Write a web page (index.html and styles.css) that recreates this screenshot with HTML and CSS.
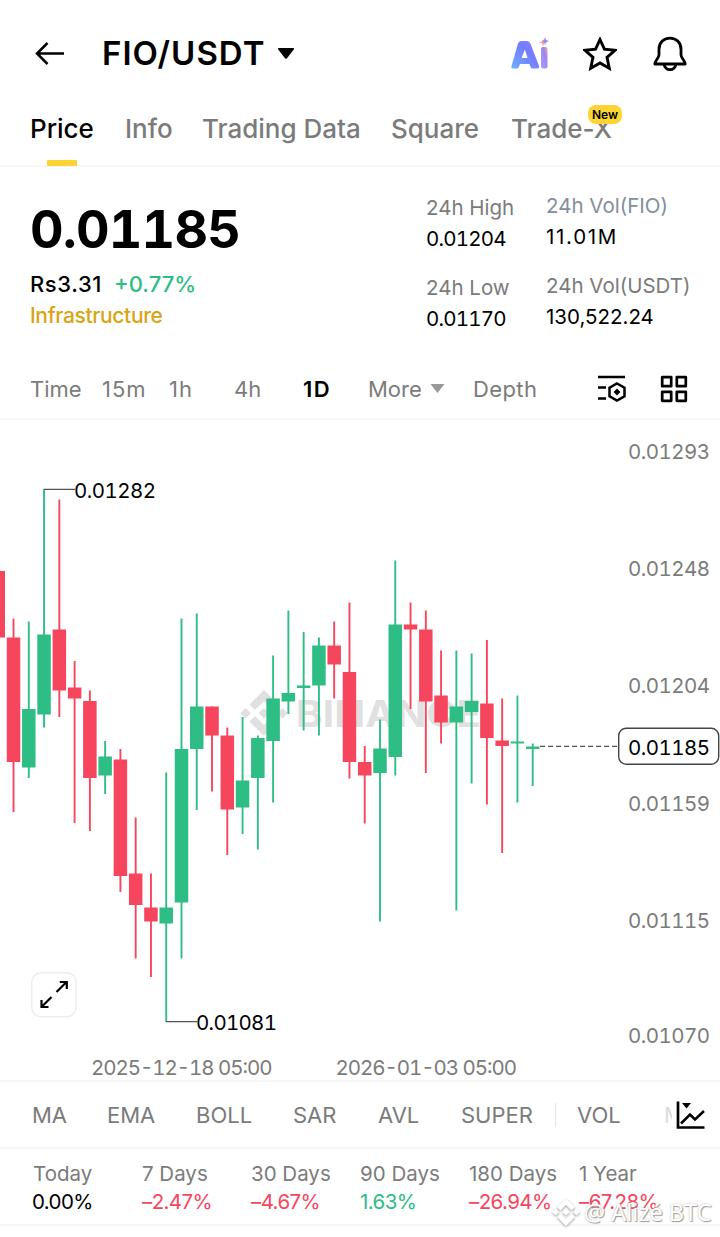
FILE: index.html
```
<!DOCTYPE html>
<html lang="en">
<head>
    <meta charset="utf-8">
    <title>FIO/USDT</title>
    <link rel="stylesheet" href="styles.css">
</head>
<body>

<header class="topbar">
    <svg class="back" width="32" height="26" viewBox="0 0 32 26"><path d="M30 12.500H3M13.500 2L3 12.500L13.500 23" fill="none" stroke="#000" stroke-width="2.500"/></svg>
    <h1 class="pair">FIO/USDT</h1>
    <svg class="caret" width="18" height="12" viewBox="0 0 18 12"><path d="M1.500 0h15q1 .5.3 1.500L10 10.300q-1 1-2 0L1.200 1.500q-.7-1 .3-1.500z"/></svg>
    <svg class="ai" width="40" height="36" viewBox="0 0 40 36">
        <defs>
            <linearGradient id="aiA" x1="0" y1="1" x2="1" y2="0"><stop offset="0" stop-color="#6cb0ff"/><stop offset=".6" stop-color="#757cff"/><stop offset="1" stop-color="#8a80ff"/></linearGradient>
            <linearGradient id="aiI" x1="1" y1="0" x2="0" y2="1"><stop offset="0" stop-color="#ffa29a"/><stop offset=".35" stop-color="#9a86f5"/><stop offset="1" stop-color="#ab9dff"/></linearGradient>
        </defs>
        <path fill="url(#aiA)" fill-rule="evenodd" d="M11 5h6q2.500 0 3.400 2.500L29 30q.5 2.500-2 2.500h-4.500q-1.500 0-2-1.500l-1-3h-9.500l-1.200 3q-.5 1.500-2 1.500H3Q.8 32.500 1.500 30L8 7.500Q9 5 11 5zM14.800 13.500l-3.200 8.500h6z"/>
        <rect x="31" y="11" width="6.500" height="21.500" rx="2" fill="url(#aiI)"/>
        <path fill="#ff9c98" d="M33 3l1 2.500 3 .8-3 1.200-1 3-1-3-3-1.200 3-.8z"/>
        <path fill="#9a86f5" d="M35 1l1 3 3 1-3 1.200-1 3-1-3-2-1.200 2-1z"/>
    </svg>
    <svg class="star" width="34" height="34" viewBox="0 0 34 34"><path d="M17 2.500l4.400 9.700 10.600 1.100-8 7.100 2.300 10.900L17 25.900l-9.300 5.400L10 20.400 2 13.300l10.600-1.100z" fill="none" stroke="#000" stroke-width="2.900"/></svg>
    <svg class="bell" width="34" height="36" viewBox="0 0 34 36"><path d="M17 2.200c-6.500 0-11 4.600-11 11v5.500c0 3.500-4.200 6-4.200 9.300h30.400c0-3.300-4.200-5.800-4.200-9.300v-5.500c0-6.400-4.500-11-11-11zM11 28c.7 3.800 3 5.700 6 5.700s5.300-1.900 6-5.700" fill="none" stroke="#000" stroke-width="2.800" stroke-linejoin="round"/></svg>
</header>

<nav class="tabs">
    <a class="tab active">Price</a>
    <a class="tab">Info</a>
    <a class="tab">Trading Data</a>
    <a class="tab">Square</a>
    <a class="tab">Trade-X<span class="new">New</span></a>
</nav>

<section class="summary">
    <div class="quote">
        <div class="last">0.01185</div>
        <div class="fiat"><span class="rs">Rs3.31</span><span class="change">+0.77%</span></div>
        <div class="category">Infrastructure</div>
    </div>
    <dl class="stats">
        <dt>24h High</dt><dd class="num">0.01204</dd>
        <dt>24h Low</dt><dd class="num">0.01170</dd>
    </dl>
    <dl class="stats vol">
        <dt class="bluish">24h Vol(FIO)</dt><dd class="amount">11.01M</dd>
        <dt>24h Vol(USDT)</dt><dd>130,522.24</dd>
    </dl>
</section>

<nav class="frames">
    <span>Time</span>
    <span class="wide">15m</span>
    <span class="wide">1h</span>
    <span>4h</span>
    <span class="on">1D</span>
    <span class="more">More <svg width="15" height="10" viewBox="0 0 15 10"><path d="M.5 0h14l-7 9z" fill="#999"/></svg></span>
    <span class="depth">Depth</span>
    <svg width="30" height="30" viewBox="0 0 30 30"><g fill="none" stroke="#000" stroke-width="2.500"><path d="M1 3h27M1 13.500h8M1 24.500h8M20 9.500l7.500 4.200v8.600l-7.500 4.200-7.500-4.200v-8.600z"/></g><path d="M20 14.600l3.400 3.400-3.400 3.400-3.400-3.400z"/></svg>
    <svg width="28" height="28" viewBox="0 0 28 28"><path d="M2.200 2.200h9v9h-9zM16.800 2.200h9v9h-9zM2.200 16.800h9v9h-9zM16.800 16.800h9v9h-9z" fill="none" stroke="#000" stroke-width="2.700" stroke-linejoin="round"/></svg>
</nav>

<section class="chart">
    <svg width="720" height="660" viewBox="0 420 720 660">
        <g class="mark">
            <path d="M264 690l14.500 14.500-5.500 5.500-9-9-9 9-5.500-5.500zM264 736l14.500-14.500-5.500-5.500-9 9-9-9-5.500 5.500zM245.500 708l5.300 5.300-5.300 5.300-5.300-5.300zM264 708l5.300 5.300-5.300 5.300-5.300-5.300zM282.500 708l5.300 5.300-5.300 5.300-5.300-5.300z"/>
            <text x="296" y="727" textLength="185" lengthAdjust="spacingAndGlyphs">BINANCE</text>
        </g>
        <g id="candles"></g>
        <path class="lead" d="M44 489.300h31M166 1021.700h31"/>
        <text class="peak" x="74" y="497.500" textLength="82">0.01282</text>
        <text class="peak" x="196" y="1029.500" textLength="81">0.01081</text>
        <path class="dash" d="M540 746.300h78"/>
        <g class="axis">
            <text x="628" y="458.500" textLength="82">0.01293</text>
            <text x="628" y="575.500" textLength="82">0.01248</text>
            <text x="628" y="692.500" textLength="82">0.01204</text>
            <text x="628" y="810.500" textLength="82">0.01159</text>
            <text x="628" y="927.500" textLength="82">0.01115</text>
            <text x="628" y="1042.500" textLength="82">0.01070</text>
            <text x="91" y="1074.500" textLength="181.500">2025-12-18 05:00</text>
            <text x="335.500" y="1074.500" textLength="181.500">2026-01-03 05:00</text>
        </g>
        <rect class="tag" x="618.700" y="728.200" width="100" height="36" rx="7.500"/>
        <text class="peak" x="628" y="754.500" textLength="82">0.01185</text>
        <rect class="expand" x="31.700" y="972.700" width="44.500" height="44" rx="9.500"/>
        <path d="M56.500 992l10-10M59.800 982h7v7M51.500 997l-10 10M41.500 1000v7h7" fill="none" stroke="#000" stroke-width="2.200"/>
    </svg>
</section>

<nav class="indicators">
    <span>MA</span>
    <span>EMA</span>
    <span>BOLL</span>
    <span>SAR</span>
    <span>AVL</span>
    <span>SUPER</span>
    <i class="sep"></i>
    <span>VOL</span>
    <span class="cut">M</span>
    <svg width="30" height="30" viewBox="0 0 30 30"><path d="M2 1.500V27.500H28.500" fill="none" stroke="#000" stroke-width="2.700"/><path d="M5 23.500l9-9 5 5L28 11" fill="none" stroke="#000" stroke-width="2.500"/><path d="M6 3h9l-4.500 5.500z"/></svg>
</nav>

<section class="perf">
    <div><span>Today</span><b class="flat">0.00%</b></div>
    <div><span>7 Days</span><b class="down">–2.47%</b></div>
    <div><span>30 Days</span><b class="down">–4.67%</b></div>
    <div><span>90 Days</span><b class="up">1.63%</b></div>
    <div><span>180 Days</span><b class="down">–26.94%</b></div>
    <div><span>1 Year</span><b class="down">–67.28%</b></div>
    <div class="credit">
        <svg width="30" height="30" viewBox="0 0 30 30"><path d="M15 1l9 9-3.500 3.500L15 8l-5.500 5.500L6 10zM15 29l9-9-3.500-3.500L15 22l-5.500-5.500L6 20zM4.500 11.500L8 15l-3.500 3.500L1 15zM15 11.500l3.500 3.500-3.500 3.500-3.500-3.500zM25.500 11.500L29 15l-3.500 3.500L22 15z"/></svg>
        <span>@ Alizé BTC</span>
    </div>
</section>

<script>
    // one row per day: high, body top, body bottom, low, colour (g = up, r = down)
    let days = [
        [571, 571, 637.5, 637.5, 'r'],
        [618.5, 637.5, 762, 812, 'r'],
        [621.5, 709, 767.5, 778, 'g'],
        [489, 634.5, 714.5, 727.5, 'g'],
        [499.5, 629.5, 690.5, 717, 'r'],
        [661, 687.5, 698.5, 823, 'r'],
        [690.5, 701, 778, 831, 'r'],
        [741, 756.5, 775.5, 794, 'g'],
        [749, 759.5, 876, 892, 'r'],
        [817.5, 873.5, 905, 958.5, 'r'],
        [873.5, 907.5, 921.5, 977, 'r'],
        [772.5, 907.5, 923.5, 1022, 'g'],
        [618.5, 749, 902.5, 958.5, 'g'],
        [613.5, 706.5, 749, 810, 'g'],
        [706.5, 706.5, 735.5, 791.5, 'r'],
        [727.5, 735.5, 809.5, 855, 'r'],
        [717, 780.5, 807.5, 834, 'g'],
        [735.5, 738, 778, 849.5, 'g'],
        [655.5, 698.5, 741, 802.5, 'g'],
        [610.5, 693, 701.5, 714, 'g'],
        [632, 685.5, 688, 730.5, 'g'],
        [637.5, 645.5, 685.5, 735.5, 'g'],
        [621.5, 645.5, 664.5, 698.5, 'r'],
        [602.5, 672, 762, 778.5, 'r'],
        [746, 762, 775.5, 823.5, 'r'],
        [719.5, 748.5, 773, 921.5, 'g'],
        [560.5, 624.5, 757, 775.5, 'g'],
        [602.5, 624.5, 629.5, 709, 'r'],
        [610.5, 629.5, 701.5, 773, 'r'],
        [650.5, 695.5, 722.5, 743.5, 'r'],
        [650.5, 706.5, 722.5, 910.5, 'g'],
        [653.5, 701, 712, 783.5, 'g'],
        [640, 703.5, 738, 804.5, 'r'],
        [698.5, 740.5, 746, 853, 'r'],
        [695.5, 741.5, 743.5, 802.5, 'g'],
        [743.5, 746.5, 749, 786, 'g']
    ]

    let candles = document.getElementById('candles')

    function addRect(x, top, width, bottom, cls) {
        let rect = document.createElementNS('http://www.w3.org/2000/svg', 'rect')
        rect.setAttribute('x', x - width / 2)
        rect.setAttribute('y', top)
        rect.setAttribute('width', width)
        rect.setAttribute('height', bottom - top)
        rect.setAttribute('class', cls)
        candles.appendChild(rect)
    }

    days.forEach((d, i) => {
        let x = -1.75 + i * 15.27
        addRect(x, d[0], 1.9, d[3], d[4])
        addRect(x, d[1], 13.5, d[2], d[4])
    })
</script>
</body>
</html>
```
FILE: styles.css
```
* {
    box-sizing: border-box;
}

body {
    margin: 0;
    width: 720px;
    height: 1237px;
    overflow: hidden;
    background: #fff;
    color: #000;
    font-family: Inter, sans-serif;
    font-size: 20.5px;
}

svg {
    display: block;
    flex: none;
}

/* header */
.topbar {
    display: flex;
    align-items: center;
    height: 108px;
    padding-left: 34px;
}

.pair {
    margin: -2px 0 0 36px;
    width: 163px;
    font-size: 33px;
    font-weight: 600;
    letter-spacing: 1px;
    white-space: nowrap;
}

.caret {
    margin-left: 12px;
}

.ai {
    margin-left: 215px;
}

.star {
    margin-left: 33px;
}

.bell {
    margin-left: 36px;
    margin-top: -1px;
}

/* page tabs */
.tabs {
    display: grid;
    grid-template-columns: 95px 77px 189px 120px 120px;
    height: 59px;
    padding-left: 30px;
    border-bottom: 2px solid #f5f5f5;
}

.tab {
    position: relative;
    font-size: 26px;
    line-height: 41px;
    font-weight: 500;
    color: #7b7b7b;
    white-space: nowrap;
}

.tab.active {
    color: #000;
}

.tab.active::after {
    content: "";
    display: block;
    width: 30px;
    height: 6px;
    margin: 11px 0 0 17px;
    background: #fcd535;
}

.new {
    position: absolute;
    left: 77px;
    top: -3px;
    width: 34px;
    height: 19px;
    border-radius: 8px;
    background: #fcd535;
    color: #000;
    font-size: 12px;
    line-height: 19px;
    font-weight: 600;
    text-align: center;
}

/* last price and 24h numbers */
.summary {
    display: grid;
    grid-template-columns: 396px 120px 1fr;
    height: 192px;
    padding-left: 30px;
}

.last {
    margin-top: 26px;
    font-size: 52px;
    line-height: 74px;
    font-weight: 700;
    letter-spacing: -0.8px;
    font-feature-settings: "tnum";
}

.fiat {
    display: flex;
    gap: 12px;
    margin-top: 1px;
    font-size: 22px;
    line-height: 32px;
    font-weight: 500;
}

.rs {
    letter-spacing: 0.6px;
}

.change {
    color: #2ebd85;
}

.category {
    font-size: 21px;
    line-height: 32px;
    font-weight: 500;
    letter-spacing: -0.35px;
    color: #d9a413;
}

.stats {
    margin: 25px 0 0;
    line-height: 32px;
    white-space: nowrap;
}

.stats.vol {
    margin-top: 23px;
}

.stats dt {
    color: #7b7b7b;
}

.stats .bluish {
    color: #848e9c;
}

.stats dd {
    margin: -1px 0 17px;
}

.num {
    font-feature-settings: "tnum";
    letter-spacing: -0.8px;
}

.amount {
    letter-spacing: 1.7px;
}

/* candle intervals */
.frames {
    display: grid;
    grid-template-columns: 72px 67px 65px 69px 65px 105px 124px 63px 1fr;
    align-items: center;
    height: 61px;
    padding-left: 30px;
    border-bottom: 2px solid #f7f7f7;
    font-size: 22px;
    color: #7b7b7b;
}

.frames .on {
    color: #000;
    font-weight: 600;
    letter-spacing: 1.5px;
}

.frames .wide {
    letter-spacing: 1px;
}

.frames .depth {
    letter-spacing: 0.4px;
}

.more {
    display: flex;
    align-items: center;
    gap: 8px;
}

/* chart */
.chart {
    height: 660px;
}

.chart text {
    font-size: 20.5px;
    font-feature-settings: "tnum";
}

.chart .mark {
    fill: #e0e0e0;
}

.chart .mark text {
    font-size: 37px;
    font-weight: 700;
}

.g {
    fill: #2ebd85;
}

.r {
    fill: #f6465d;
}

.axis {
    fill: #7b7b7b;
}

.lead {
    stroke: #555;
    stroke-width: 1.3;
}

.dash {
    stroke: #555;
    stroke-width: 1.3;
    stroke-dasharray: 5 3;
}

.tag {
    fill: #fff;
    stroke: #444;
    stroke-width: 1.4;
}

.expand {
    fill: #fff;
    stroke: #ededed;
    stroke-width: 1.5;
}

/* indicator row */
.indicators {
    display: grid;
    grid-template-columns: 75px 89px 97px 85px 83px 94px 22px 87px 12px 1fr;
    align-items: center;
    height: 69px;
    padding-left: 32px;
    border-top: 2px solid #f5f5f5;
    border-bottom: 2px solid #f5f5f5;
    font-size: 22px;
    color: #7b7b7b;
}

.sep {
    width: 1px;
    height: 24px;
    background: #e6e6e6;
}

.cut {
    width: 8px;
    overflow: hidden;
    color: #ddd;
}

/* performance */
.perf {
    position: relative;
    display: grid;
    grid-template-columns: 109px 109px 109px 109px 110px 1fr;
    height: 77px;
    padding: 11px 0 0 32px;
    border-bottom: 2px solid #f5f5f5;
    line-height: 28px;
    white-space: nowrap;
}

.perf span {
    display: block;
    padding-left: 1px;
    color: #7b7b7b;
}

.perf b {
    display: block;
    font-weight: 400;
    letter-spacing: -0.6px;
}

.perf .up {
    padding-left: 1px;
    color: #2ebd85;
}

.perf .down {
    padding-left: 1px;
    color: #f6465d;
}

/* author stamp over the last column */
.credit {
    position: absolute;
    left: 551px;
    top: 48px;
    display: flex;
    align-items: center;
    gap: 2px;
    font-family: "Noto Sans", sans-serif;
    font-size: 23.5px;
}

.perf .credit span {
    color: #fff;
    text-shadow: 1px 1px 1px #999, 0 0 2px #bbb;
}

.credit svg {
    fill: #fff;
    filter: drop-shadow(0 1px 1px #999);
}
```
